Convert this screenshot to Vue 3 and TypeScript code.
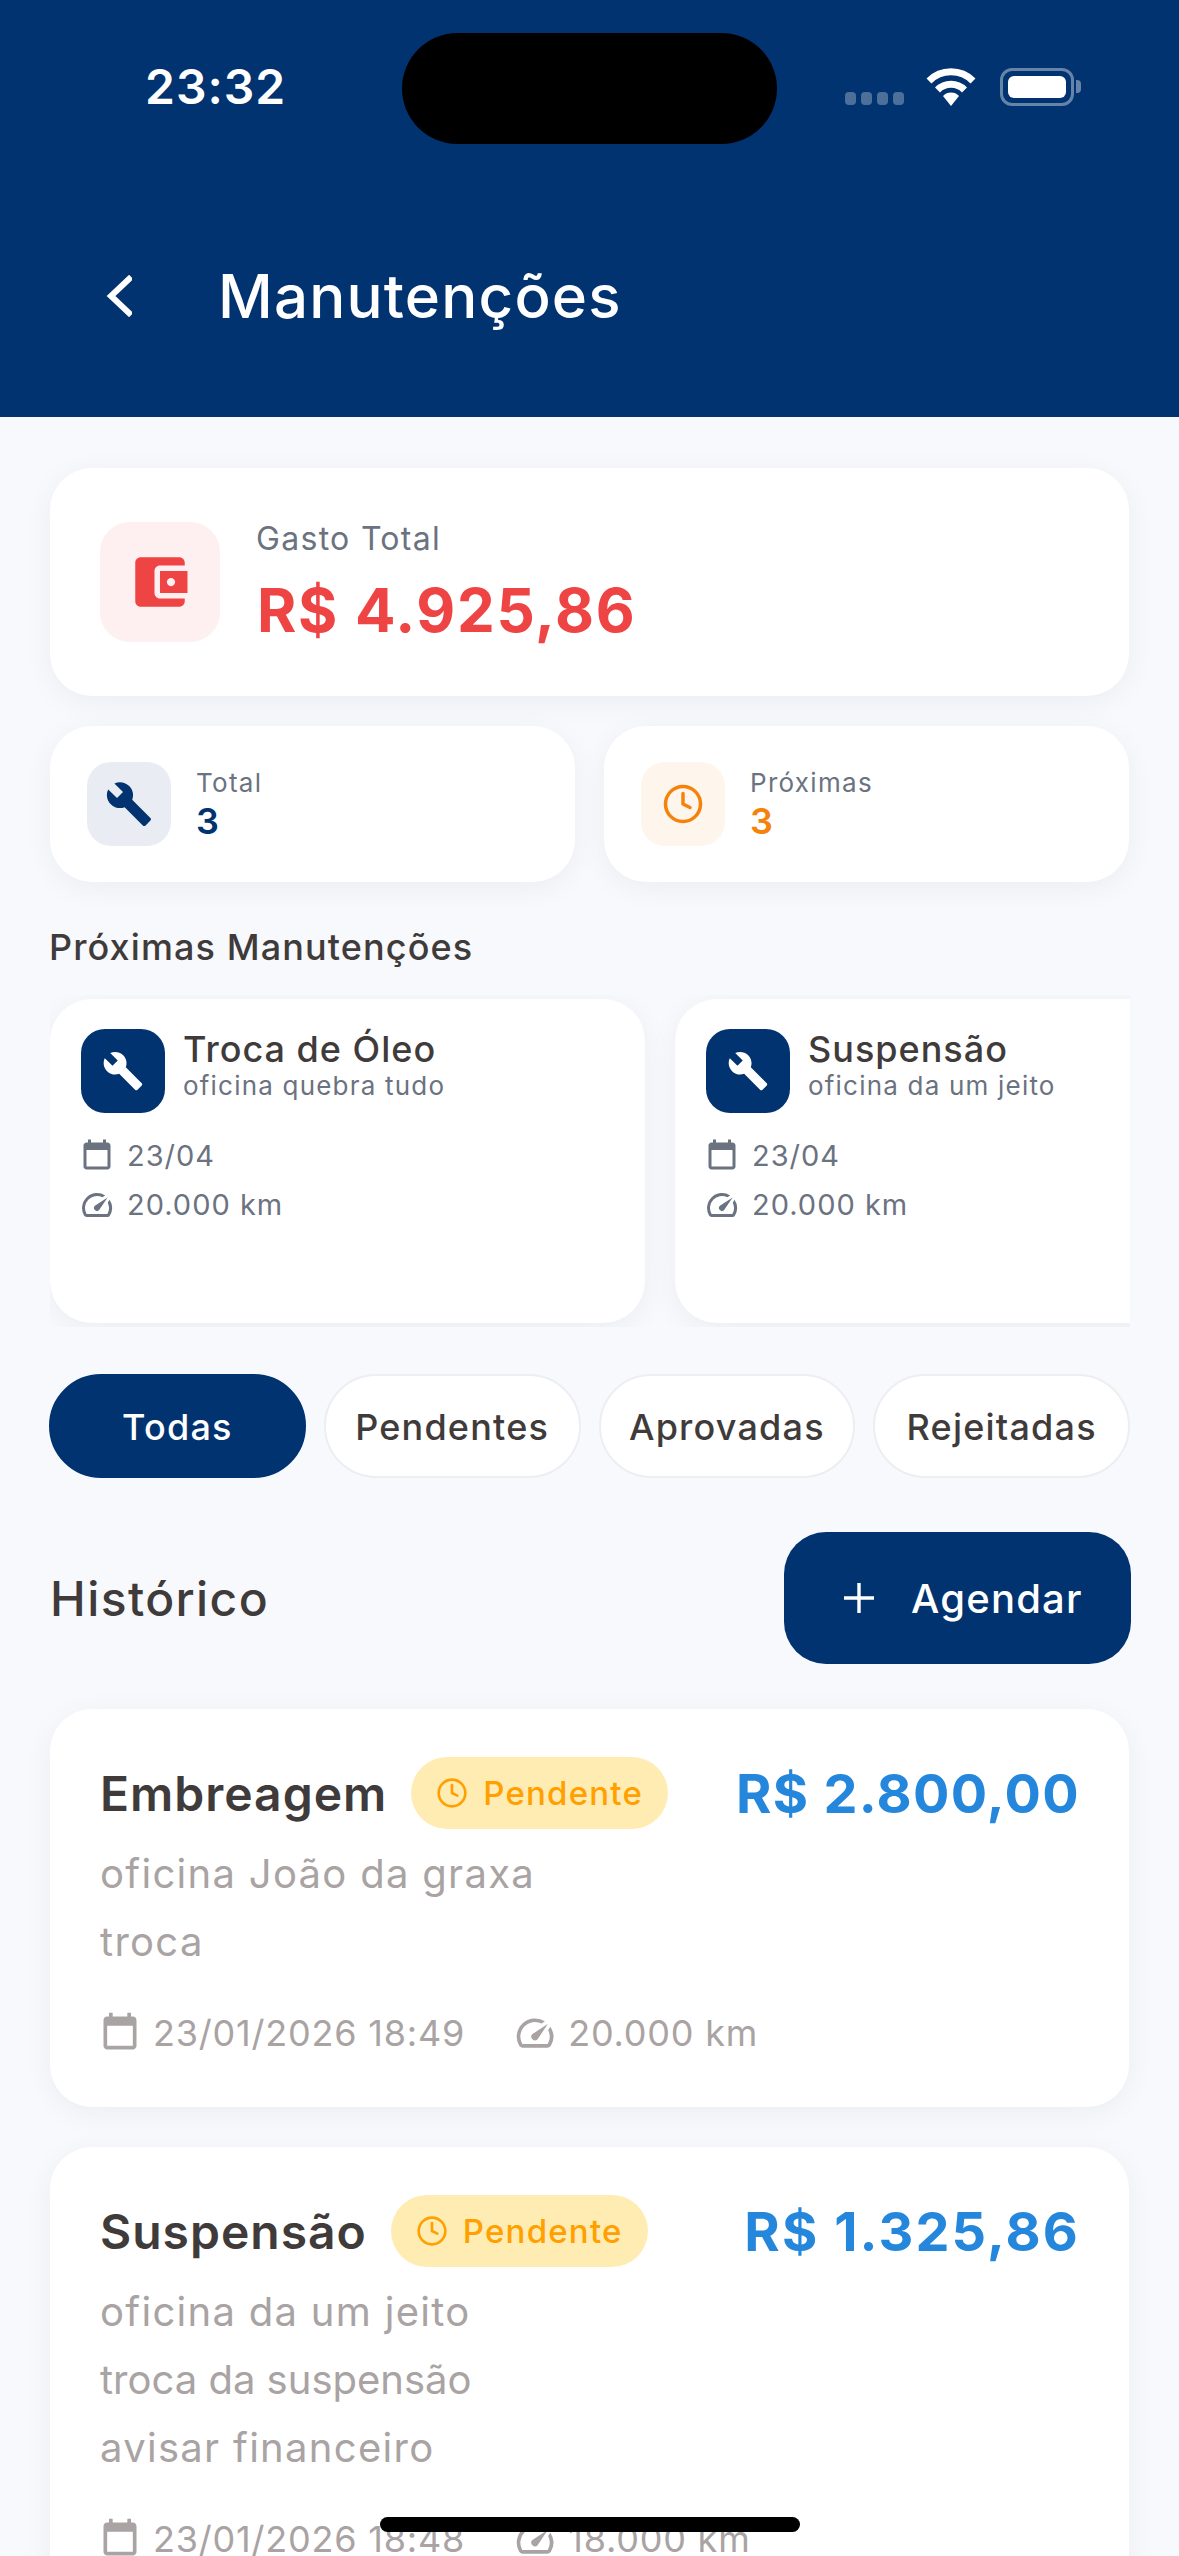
<script setup lang="ts">
const WRENCH = 'M22.7 19l-9.1-9.1c.9-2.3.4-5-1.5-6.9-2-2-5-2.4-7.4-1.3L9 6 6 9 1.6 4.7C.4 7.1.9 10.1 2.9 12.1c1.9 1.9 4.6 2.4 6.9 1.5l9.1 9.1c.4.4 1 .4 1.4 0l2.3-2.3c.5-.4.5-1.1.1-1.4z'
const CAL = 'M19 3h-1V1h-2v2H8V1H6v2H5c-1.1 0-2 .9-2 2v14c0 1.1.9 2 2 2h14c1.1 0 2-.9 2-2V5c0-1.1-.9-2-2-2zm0 16H5V8h14v11z'
const SPEED = 'M20.38 8.57l-1.23 1.85a8 8 0 0 1-.22 7.58H5.07A8 8 0 0 1 15.58 6.85l1.85-1.23A10 10 0 0 0 3.35 19a2 2 0 0 0 1.72 1h13.85a2 2 0 0 0 1.74-1 10 10 0 0 0-.27-10.44zM10.59 15.41a2 2 0 0 0 2.83 0l5.66-8.49-8.49 5.66a2 2 0 0 0 0 2.83z'
const WALLET = 'M21 18v1c0 1.1-.9 2-2 2H5c-1.11 0-2-.9-2-2V5c0-1.1.89-2 2-2h14c1.1 0 2 .9 2 2v1h-9c-1.11 0-2 .9-2 2v8c0 1.1.89 2 2 2h9zm-9-2h10V8H12v8zm4-2.5c-.83 0-1.5-.67-1.5-1.5s.67-1.5 1.5-1.5 1.5.67 1.5 1.5-.67 1.5-1.5 1.5z'

const nextItems = [
  { title: 'Troca de Óleo', shop: 'oficina quebra tudo', date: '23/04', km: '20.000 km' },
  { title: 'Suspensão', shop: 'oficina da um jeito', date: '23/04', km: '20.000 km' }
]
const chips = ['Todas', 'Pendentes', 'Aprovadas', 'Rejeitadas']
const history = [
  { title: 'Embreagem', price: 'R$ 2.800,00', wide: false, lines: [{ t: 'oficina João da graxa', tight: false }, { t: 'troca', tight: false }], date: '23/01/2026 18:49', km: '20.000 km' },
  { title: 'Suspensão', price: 'R$ 1.325,86', wide: true, lines: [{ t: 'oficina da um jeito', tight: false }, { t: 'troca da suspensão', tight: true }, { t: 'avisar financeiro', tight: false }], date: '23/01/2026 18:48', km: '18.000 km' }
]
</script>

<template>
  <div class="screen">
    <header class="header">
      <div class="status">
        <span class="time">23:32</span>
        <div class="status-right">
          <div class="signal"><i></i><i></i><i></i><i></i></div>
          <svg class="wifi" viewBox="0 0 50 38" fill="none" stroke="#fff" stroke-width="7">
            <path d="M3 13a31 31 0 0 1 44 0" />
            <path d="M11.5 22a19 19 0 0 1 27 0" />
            <path d="M25 38l-8-10a11 11 0 0 1 16 0z" fill="#fff" stroke="none" />
          </svg>
          <div class="battery"><div class="battery-fill"></div></div>
          <div class="battery-nub"></div>
        </div>
      </div>
      <div class="navbar">
        <svg class="back" viewBox="0 0 27 42" fill="none" stroke="#fff" stroke-width="6" stroke-linecap="square">
          <path d="M24 4L6 21l18 17" />
        </svg>
        <h1 class="page-title">Manutenções</h1>
      </div>
    </header>
    <div class="island"></div>

    <main class="content">
      <section class="card total-card">
        <div class="total-icon">
          <svg viewBox="0 0 24 24" width="66" height="66"><path :d="WALLET" fill="#ef4444" /></svg>
        </div>
        <div>
          <div class="total-label">Gasto Total</div>
          <div class="total-value">R$ 4.925,86</div>
        </div>
      </section>

      <section class="stats">
        <div class="card stat">
          <div class="stat-icon navy-soft">
            <svg viewBox="0 0 24 24" width="48" height="48"><path :d="WRENCH" fill="#003370" /></svg>
          </div>
          <div>
            <div class="stat-label">Total</div>
            <div class="stat-value navy">3</div>
          </div>
        </div>
        <div class="card stat">
          <div class="stat-icon orange-soft">
            <svg viewBox="0 0 24 24" width="42" height="42" fill="none" stroke="#f5820b" stroke-width="2" stroke-linecap="round" stroke-linejoin="round">
              <circle cx="12" cy="12" r="10" /><path d="M12 6v6l4 2" />
            </svg>
          </div>
          <div>
            <div class="stat-label">Próximas</div>
            <div class="stat-value orange">3</div>
          </div>
        </div>
      </section>

      <h2 class="section-title">Próximas Manutenções</h2>

      <section class="next-scroll">
        <article v-for="n in nextItems" :key="n.title" class="card next-card">
          <div class="next-head">
            <div class="next-icon">
              <svg viewBox="0 0 24 24" width="42" height="42"><path :d="WRENCH" fill="#fff" /></svg>
            </div>
            <div class="next-text">
              <div class="next-title">{{ n.title }}</div>
              <div class="next-shop">{{ n.shop }}</div>
            </div>
          </div>
          <div class="next-row">
            <svg viewBox="0 0 24 24" width="36" height="36"><path :d="CAL" fill="#6b7280" /></svg>
            <span>{{ n.date }}</span>
          </div>
          <div class="next-row">
            <svg viewBox="0 0 24 24" width="36" height="36"><path :d="SPEED" fill="#6b7280" /></svg>
            <span>{{ n.km }}</span>
          </div>
        </article>
      </section>

      <nav class="chips">
        <button v-for="(c, i) in chips" :key="c" class="chip" :class="{ active: i === 0 }">{{ c }}</button>
      </nav>

      <div class="history-head">
        <h2 class="history-title">Histórico</h2>
        <button class="add-btn">
          <svg viewBox="0 0 36 36" width="36" height="36" fill="none" stroke="#fff" stroke-width="3.4">
            <path d="M18 3v30M3 18h30" />
          </svg>
          <span>Agendar</span>
        </button>
      </div>

      <article v-for="h in history" :key="h.price" class="card history-card">
        <div class="h-top">
          <div class="h-left">
            <span class="h-title">{{ h.title }}</span>
            <span class="badge">
              <svg viewBox="0 0 24 24" width="32" height="32" fill="none" stroke="#ffa000" stroke-width="2" stroke-linecap="round" stroke-linejoin="round">
                <circle cx="12" cy="12" r="10" /><path d="M12 6v6l4 2" />
              </svg>
              <span>Pendente</span>
            </span>
          </div>
          <span class="h-price" :class="{ wide: h.wide }">{{ h.price }}</span>
        </div>
        <div class="h-lines">
          <div v-for="l in h.lines" :key="l.t" class="h-line" :class="{ tight: l.tight }">{{ l.t }}</div>
        </div>
        <div class="h-meta">
          <svg viewBox="0 0 24 24" width="44" height="44"><path :d="CAL" fill="#a9a3a3" /></svg>
          <span class="h-date">{{ h.date }}</span>
          <svg viewBox="0 0 24 24" width="44" height="44"><path :d="SPEED" fill="#a9a3a3" /></svg>
          <span>{{ h.km }}</span>
        </div>
      </article>
    </main>
    <div class="home-bar"></div>
  </div>
</template>

<style>
html, body { margin: 0; background: #f8f9fd; }
</style>

<style scoped>
* { box-sizing: border-box; }
.screen {
  position: relative;
  width: 1179px;
  height: 2556px;
  overflow: hidden;
  background: #f8f9fd;
  font-family: Inter, "Liberation Sans", sans-serif;
}
.header { height: 417px; background: #003370; color: #fff; }
.status {
  display: flex;
  justify-content: space-between;
  height: 174px;
  padding: 58px 98px 0 145px;
}
.time { font-size: 48px; font-weight: 600; line-height: 58px; letter-spacing: 1px; }
.status-right { display: flex; align-items: flex-start; padding-top: 10px; }
.signal { display: flex; gap: 5px; margin: 24px 22px 0 0; }
.signal i { width: 11px; height: 13px; border-radius: 4px; background: rgba(255,255,255,.3); }
.wifi { width: 50px; height: 38px; margin-right: 24px; }
.battery {
  width: 74px; height: 38px; padding: 5px;
  border: 3px solid rgba(255,255,255,.4);
  border-radius: 12px;
}
.battery-fill { height: 100%; background: #fff; border-radius: 6px; }
.battery-nub { width: 5px; height: 13px; margin: 12px 0 0 2px; background: rgba(255,255,255,.4); border-radius: 0 4px 4px 0; }
.island {
  position: absolute; left: 402px; top: 33px;
  width: 375px; height: 111px;
  border-radius: 56px; background: #000;
}
.navbar { display: flex; align-items: center; height: 72px; margin-top: 86px; padding-left: 105px; }
.back { width: 27px; height: 42px; margin-right: 86px; }
.page-title { margin: 0; font-size: 60px; font-weight: 500; letter-spacing: 1.2px; line-height: 72px; }

.content { padding: 51px 50px 0; }
.card {
  background: #fff;
  border-radius: 42px;
  box-shadow: 0 6px 30px rgba(15, 23, 42, .05);
}
.total-card {
  display: flex; align-items: center; gap: 36px;
  height: 228px; padding: 0 50px;
}
.total-icon {
  width: 120px; height: 120px; border-radius: 30px;
  background: #fef0f0;
  display: flex; align-items: center; justify-content: center;
}
.total-label { font-size: 32px; line-height: 40px; color: #6b7280; letter-spacing: 1.3px; margin-bottom: 15px; }
.total-value { font-size: 60px; line-height: 72px; font-weight: 700; color: #ef4444; letter-spacing: 1.7px; margin-left: 1px; }

.stats { display: grid; grid-template-columns: 525px 525px; gap: 29px; margin-top: 30px; }
.stat { display: flex; align-items: center; gap: 25px; height: 156px; padding: 0 37px; }
.stat-icon { width: 84px; height: 84px; border-radius: 24px; display: flex; align-items: center; justify-content: center; }
.navy-soft { background: #e9edf3; }
.orange-soft { background: #fef5ec; }
.stat-label { font-size: 26px; line-height: 34px; color: #6b7280; letter-spacing: 1.3px; }
.stat-value { font-size: 36px; line-height: 42px; font-weight: 600; }
.navy { color: #003370; }
.orange { color: #f5820b; }

.section-title { margin: 45px 0 28px -1px; font-size: 36px; line-height: 40px; font-weight: 500; color: #3f3b3b; letter-spacing: 1.1px; }

.next-scroll {
  display: flex; gap: 30px;
  width: 1080px; height: 332px;
  margin-bottom: 47px;
  padding: 4px 0;
  overflow: hidden;
}
.next-card { flex: 0 0 595px; height: 324px; padding: 30px 31px; }
.next-head { display: flex; gap: 18px; align-items: flex-start; margin-bottom: 18px; }
.next-icon {
  flex: none;
  width: 84px; height: 84px; border-radius: 24px; background: #003370;
  display: flex; align-items: center; justify-content: center;
}
.next-text { margin-top: -2px; }
.next-title { font-size: 36px; line-height: 44px; font-weight: 500; color: #3f3b3b; letter-spacing: 1px; }
.next-shop { font-size: 26px; line-height: 30px; color: #6b7280; letter-spacing: 1.2px; }
.next-row {
  display: flex; align-items: center; gap: 12px;
  height: 49px; margin-left: -2px;
  font-size: 29px; color: #6b7280; letter-spacing: 1px;
}

.chips { display: grid; grid-template-columns: repeat(4, 1fr); gap: 18px; margin: 0 -1px; }
.chip {
  height: 104px; border-radius: 52px;
  border: 2px solid #eceef3; background: #fff;
  font: 500 36px Inter, "Liberation Sans", sans-serif;
  color: #3f3b3b; letter-spacing: 1.2px; padding: 2px 0 0;
}
.chip.active { background: #003370; border-color: #003370; color: #fff; }

.history-head { display: flex; align-items: center; justify-content: space-between; height: 132px; margin-top: 54px; margin-bottom: 45px; }
.history-title { margin: 0; font-size: 48px; font-weight: 500; color: #3f3b3b; letter-spacing: 1.4px; }
.add-btn {
  display: flex; align-items: center; gap: 34px;
  width: 347px; height: 132px; margin-right: -2px; padding: 0 0 0 57px;
  border: 0; border-radius: 42px; background: #003370; color: #fff;
  font: 500 40px Inter, "Liberation Sans", sans-serif; letter-spacing: 1.2px;
}

.history-card { height: 398px; padding: 48px 50px 0; margin-bottom: 40px; overflow: hidden; }
.history-card:last-child { height: 500px; }
.h-top { display: flex; justify-content: space-between; align-items: center; height: 72px; }
.h-left { display: flex; align-items: center; gap: 24px; }
.h-title { font-size: 48px; font-weight: 600; color: #3f3b3b; letter-spacing: 1px; }
.badge {
  display: flex; align-items: center; gap: 15px;
  height: 72px; padding: 0 25px;
  border-radius: 36px; background: #ffecb3;
  color: #ffa000; font-size: 33px; font-weight: 500; letter-spacing: 1.2px;
}
.h-price { font-size: 54px; font-weight: 700; color: #2587dc; letter-spacing: 1.3px; margin-right: -1px; }
.h-price.wide { letter-spacing: 2.1px; }
.h-lines { margin-top: 11px; }
.h-line { height: 68px; line-height: 68px; font-size: 40px; color: #a9a3a3; letter-spacing: 1.3px; }
.h-line.tight { letter-spacing: 0; }
.h-meta {
  display: flex; align-items: center; gap: 11px;
  height: 56px; margin-top: 29px; margin-left: -2px;
  font-size: 36px; color: #a9a3a3; letter-spacing: 0.8px;
}
.h-date { margin-right: 37px; }
.home-bar {
  position: absolute; left: 380px; top: 2517px;
  width: 420px; height: 15px; border-radius: 8px; background: #000;
}
</style>
